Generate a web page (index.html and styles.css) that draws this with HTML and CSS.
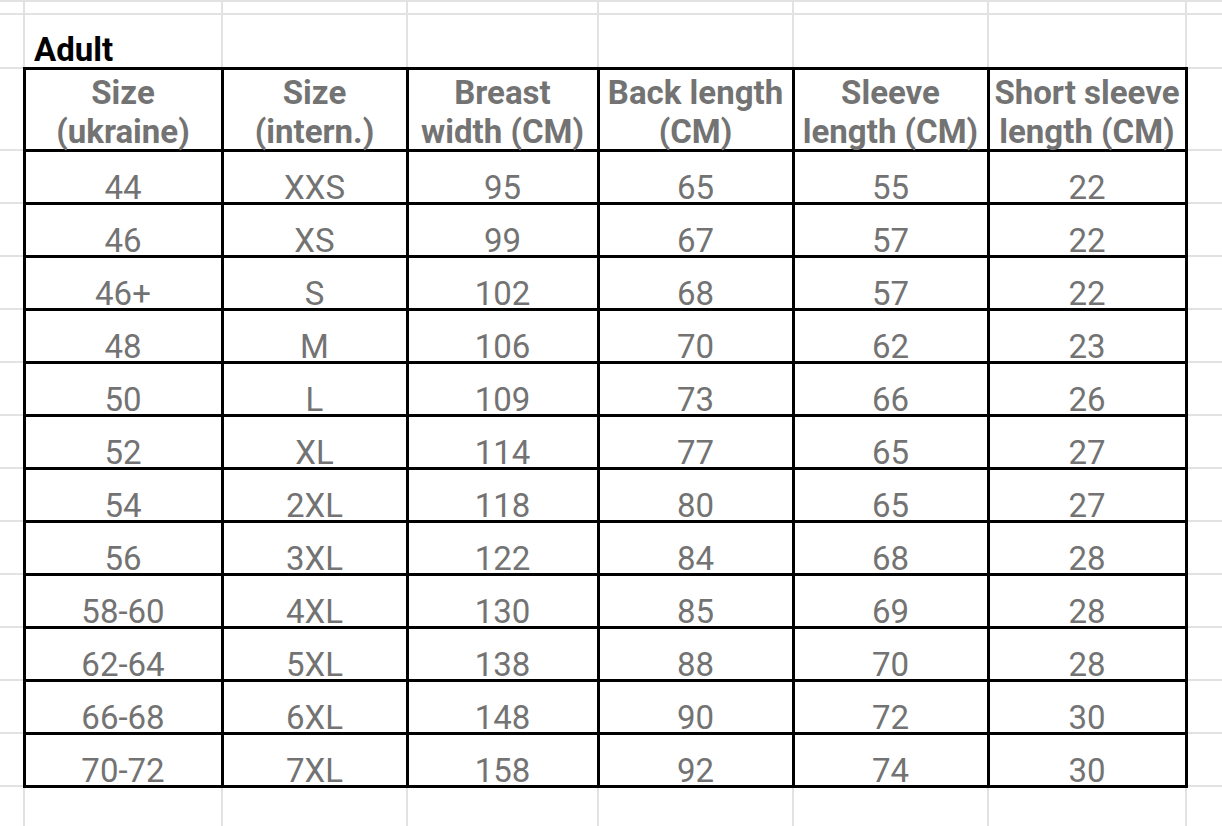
FILE: index.html
```html
<!DOCTYPE html>
<html lang="en">
<head>
<meta charset="utf-8">
<title>Adult size chart</title>
<link rel="stylesheet" href="styles.css">
</head>
<body>
<table class="sheet">
  <colgroup>
    <col class="c0"><col class="c1"><col class="c2"><col class="c3"><col class="c4"><col class="c5"><col class="c6"><col class="c7">
  </colgroup>
  <tr class="r-top"><td></td><td></td><td></td><td></td><td></td><td></td><td></td><td></td></tr>
  <tr class="r-title"><td></td><td class="title">Adult</td><td></td><td></td><td></td><td></td><td></td><td></td></tr>
  <tr class="r-head">
    <td></td>
    <th class="sz"><div class="hl">Size<br>(ukraine)</div></th>
    <th class="sz"><div class="hl">Size<br>(intern.)</div></th>
    <th class="sz"><div class="hl">Breast<br>width (CM)</div></th>
    <th class="sz"><div class="hl">Back length<br>(CM)</div></th>
    <th class="sz"><div class="hl">Sleeve<br>length (CM)</div></th>
    <th class="sz"><div class="hl">Short sleeve<br>length (CM)</div></th>
    <td></td>
  </tr>
  <tr class="r-data"><td></td><td class="sz">44</td><td class="sz">XXS</td><td class="sz">95</td><td class="sz">65</td><td class="sz">55</td><td class="sz">22</td><td></td></tr>
  <tr class="r-data"><td></td><td class="sz">46</td><td class="sz">XS</td><td class="sz">99</td><td class="sz">67</td><td class="sz">57</td><td class="sz">22</td><td></td></tr>
  <tr class="r-data"><td></td><td class="sz">46+</td><td class="sz">S</td><td class="sz">102</td><td class="sz">68</td><td class="sz">57</td><td class="sz">22</td><td></td></tr>
  <tr class="r-data"><td></td><td class="sz">48</td><td class="sz">M</td><td class="sz">106</td><td class="sz">70</td><td class="sz">62</td><td class="sz">23</td><td></td></tr>
  <tr class="r-data"><td></td><td class="sz">50</td><td class="sz">L</td><td class="sz">109</td><td class="sz">73</td><td class="sz">66</td><td class="sz">26</td><td></td></tr>
  <tr class="r-data"><td></td><td class="sz">52</td><td class="sz">XL</td><td class="sz">114</td><td class="sz">77</td><td class="sz">65</td><td class="sz">27</td><td></td></tr>
  <tr class="r-data"><td></td><td class="sz">54</td><td class="sz">2XL</td><td class="sz">118</td><td class="sz">80</td><td class="sz">65</td><td class="sz">27</td><td></td></tr>
  <tr class="r-data"><td></td><td class="sz">56</td><td class="sz">3XL</td><td class="sz">122</td><td class="sz">84</td><td class="sz">68</td><td class="sz">28</td><td></td></tr>
  <tr class="r-data"><td></td><td class="sz">58-60</td><td class="sz">4XL</td><td class="sz">130</td><td class="sz">85</td><td class="sz">69</td><td class="sz">28</td><td></td></tr>
  <tr class="r-data"><td></td><td class="sz">62-64</td><td class="sz">5XL</td><td class="sz">138</td><td class="sz">88</td><td class="sz">70</td><td class="sz">28</td><td></td></tr>
  <tr class="r-data"><td></td><td class="sz">66-68</td><td class="sz">6XL</td><td class="sz">148</td><td class="sz">90</td><td class="sz">72</td><td class="sz">30</td><td></td></tr>
  <tr class="r-data"><td></td><td class="sz">70-72</td><td class="sz">7XL</td><td class="sz">158</td><td class="sz">92</td><td class="sz">74</td><td class="sz">30</td><td></td></tr>
  <tr class="r-end"><td></td><td></td><td></td><td></td><td></td><td></td><td></td><td></td></tr>
</table>
</body>
</html>
```

FILE: styles.css
```css
html, body {
  margin: 0;
  padding: 0;
  background: #ffffff;
  overflow: hidden;
  width: 1222px;
  height: 826px;
}

.sheet {
  border-collapse: collapse;
  table-layout: fixed;
  width: 1222px;
  font-family: Roboto, "Liberation Sans", Arial, sans-serif;
  font-size: 33px;
}

.c0 { width: 24px; }
.c1 { width: 198px; }
.c2 { width: 185px; }
.c3 { width: 191px; }
.c4 { width: 195px; }
.c5 { width: 195px; }
.c6 { width: 198px; }
.c7 { width: 36px; }

.sheet td,
.sheet th {
  border: 2px solid #e2e2e2;
  padding: 0;
  vertical-align: bottom;
  text-align: center;
  white-space: nowrap;
  overflow: visible;
}

.sheet tr > :first-child { border-left: none; }
.sheet tr > :last-child { border-right: none; }
.r-top > * { border-top: none; }

.r-top { height: 13px; }
.r-title { height: 54px; }
.r-head { height: 82px; }
.r-data { height: 53px; }
.r-end { height: 53px; }

.sheet .title {
  text-align: left;
  padding-left: 9px;
  font-weight: 700;
  color: #000000;
  line-height: 34px;
  padding-bottom: 0;
}

.sheet .sz {
  border: 3px solid #000000;
  color: #737373;
}

.r-head .sz {
  font-weight: 700;
}

.hl {
  line-height: 39px;
  margin-bottom: -2px;
}

.r-data .sz {
  font-weight: 400;
  line-height: 29px;
}
```
